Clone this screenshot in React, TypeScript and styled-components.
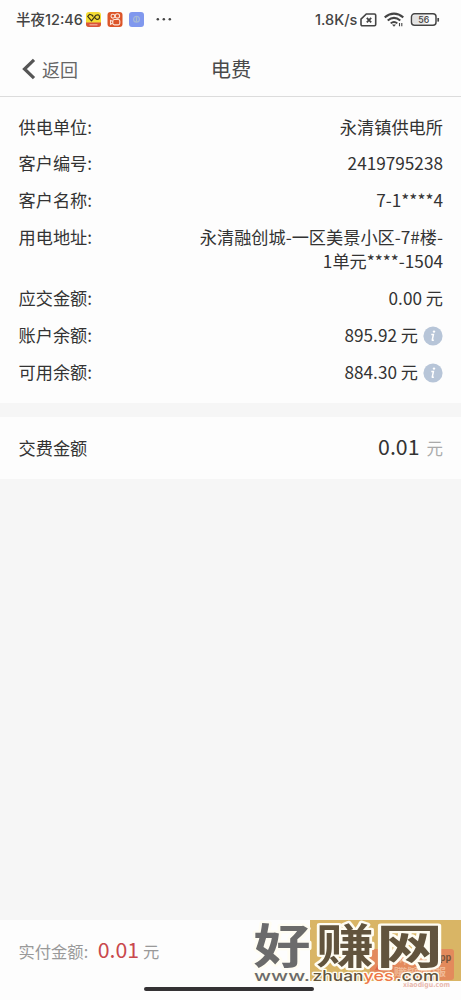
import React from 'react';
import styled, { createGlobalStyle } from 'styled-components';

const Global = createGlobalStyle`
  * { box-sizing: border-box; }
  body {
    margin: 0;
    background: #f6f6f6;
    font-family: "Noto Sans CJK SC", "Noto Sans", sans-serif;
    color: #333;
  }
`;

const Screen = styled.div`
  width: 461px;
  height: 1000px;
  display: flex;
  flex-direction: column;
  background: #f6f6f6;
  overflow: hidden;
`;

const StatusBar = styled.div`
  height: 40px;
  flex: none;
  background: #fdfdfd;
  display: flex;
  align-items: center;
  justify-content: space-between;
  padding: 0 21px 0 16px;
`;

const StatusGroup = styled.div<{ $gap: number }>`
  display: flex;
  align-items: center;
  gap: ${(p) => p.$gap}px;
`;

const StatusText = styled.span<{ $width: number }>`
  width: ${(p) => p.$width}px;
  font-family: Inter, "Noto Sans CJK SC", sans-serif;
  font-size: 14.5px;
  line-height: 20px;
  font-weight: 500;
  color: #444;
  white-space: nowrap;
`;

const Header = styled.header`
  height: 57px;
  flex: none;
  background: #fdfdfd;
  border-bottom: 1px solid #dcdcdc;
  display: grid;
  grid-template-columns: 1fr auto 1fr;
  align-items: center;
  padding: 0 21px 0 22px;
`;

const Back = styled.div`
  display: flex;
  align-items: center;
  gap: 6px;
  font-size: 18px;
  line-height: 26px;
  color: #666;
  padding-top: 2px;
`;

const Title = styled.div`
  font-size: 20.3px;
  line-height: 28px;
  color: #4a4a4a;
  padding-bottom: 1px;
`;

const Details = styled.section`
  height: 306px;
  flex: none;
  background: #fdfdfd;
  padding: 17.6px 18px 0 18.5px;
  display: flex;
  flex-direction: column;
  gap: 12.5px;
`;

const Row = styled.div`
  display: flex;
  justify-content: space-between;
  font-size: 17.2px;
  line-height: 24.3px;
`;

const Value = styled.div`
  display: flex;
  align-items: center;
  gap: 5px;
  text-align: right;
  white-space: pre-line;
`;

const PayRow = styled.section`
  height: 62px;
  flex: none;
  margin-top: 14px;
  padding: 0 18px 2px 18.5px;
  background: #fdfdfd;
  display: flex;
  align-items: center;
  justify-content: space-between;
  font-size: 17.2px;
`;

const Amount = styled.div`
  display: flex;
  align-items: baseline;
  gap: 7px;
  padding-bottom: 2px;
`;

const Figure = styled.span`
  font-size: 21.3px;
  line-height: 30px;
  color: #333;
`;

const Unit = styled.span`
  font-size: 16.5px;
  line-height: 24px;
  color: #aaa;
`;

const Footer = styled.footer`
  position: relative;
  margin-top: auto;
  height: 80px;
  flex: none;
  background: #fdfdfd;
  padding: 12px 18px 0 18.5px;
`;

const Total = styled.div`
  display: flex;
  align-items: baseline;
  font-size: 16.3px;
  line-height: 34px;
  color: #999;
`;

const TotalFigure = styled.span`
  font-size: 21.3px;
  color: #c9484c;
  margin: 0 4px 0 9.5px;
`;

const HomeBar = styled.div`
  position: absolute;
  left: 144px;
  bottom: 9px;
  width: 170px;
  height: 4px;
  border-radius: 2px;
  background: #343234;
`;

const Watermark = styled.svg`
  position: absolute;
  right: 0;
  top: 0;
  display: block;
  overflow: visible;
`;

const InfoBadge = styled.svg`
  flex: none;
  margin-top: 2px;
`;

const InfoIcon = () => (
  <InfoBadge width="20" height="20" viewBox="0 0 20 20">
    <circle cx="10" cy="10" r="9.6" fill="#b7c5d8" />
    <circle cx="11" cy="5.6" r="1.2" fill="#fff" />
    <path d="M8.3 8.6h2.1l-1.1 5.2q-.2 1 1.5.1" fill="none" stroke="#fff" strokeWidth="1.5" />
  </InfoBadge>
);

const AppIcons = () => (
  <svg width="87" height="16" viewBox="0 0 87 16">
    <rect width="15" height="15" y="0" rx="3" fill="#f4dc35" />
    <path d="M0 10.5h15v1.500a3 3 0 0 1-3 3H3a3 3 0 0 1-3-3z" fill="#d9533b" />
    <path d="M3.5 12.800h8" stroke="#f6b09a" strokeWidth="1.2" />
    <path d="M7.300 4.500L5.800 3 3.500 2.300 1.700 4.300 5.500 8.800 10 3.200Q13.500 2 13.500 5T10.300 7.200L8.800 5.600" fill="none" stroke="#3b3418" strokeWidth="1.2" strokeLinejoin="round" />
    <rect x="21.5" y="0" width="15" height="15" rx="3" fill="#dc5529" />
    <g fill="none" stroke="#fbe3d8" strokeWidth="1.1">
      <circle cx="26.9" cy="4.2" r="1.9" />
      <circle cx="31.4" cy="3.900" r="2.2" />
      <rect x="26.8" y="7.500" width="7" height="5.400" rx="1.6" />
      <path d="M26.8 9.500l-2.3-1.2v4l2.3-1.2" />
    </g>
    <rect x="43" y="0" width="15" height="15" rx="3" fill="#8098ee" />
    <circle cx="50.5" cy="7.3" r="2.9" fill="none" stroke="#a5b9d8" strokeWidth="1.2" />
    <path d="M50.5 5.200v4.500" stroke="#a9bfc9" strokeWidth="1.2" />
    <g fill="#444">
      <circle cx="71.8" cy="7.3" r="1.25" />
      <circle cx="77.8" cy="7.3" r="1.25" />
      <circle cx="83.8" cy="7.3" r="1.25" />
    </g>
  </svg>
);

const SignalIcons = () => (
  <svg width="80" height="16" viewBox="0 0 80 16" fill="none" stroke="#444">
    <path d="M6.3 2h8.2a1.2 1.2 0 0 1 1.2 1.2v9.4a1.2 1.2 0 0 1-1.2 1.2H2.2A1.2 1.2 0 0 1 1 12.600V7.200z" strokeWidth="1.6" />
    <path d="M6.800 5.900l4.400 4.400M11.200 5.900L6.800 10.300" strokeWidth="1.800" />
    <path d="M24.700 5.300Q34 -1.900 43.300 5.300" strokeWidth="2.100" />
    <path d="M27.700 8.500Q34 3.300 40.300 8.500" strokeWidth="2.100" />
    <path d="M30.700 11.400Q34 8.400 37.300 11.400" strokeWidth="1.900" />
    <path d="M32 12.400h4L34 14.800z" fill="#444" stroke="none" />
    <path d="M39.500 11v3.300M41.800 11v3.300" strokeWidth="1.100" />
    <rect x="51.500" y="1.800" width="24.500" height="11.500" rx="3" strokeWidth="1.500" />
    <rect x="53" y="3.300" width="12" height="8.500" rx="1" fill="#e2e2e2" stroke="none" />
    <path d="M78.200 6v3.600" strokeWidth="1.700" />
    <text x="63.800" y="10.800" textAnchor="middle" fontFamily="Inter, sans-serif" fontSize="9" fontWeight="500" textLength="11" lengthAdjust="spacingAndGlyphs" fill="#444" stroke="none">56</text>
  </svg>
);

const SiteMark = () => (
  <Watermark width="211" height="70" viewBox="0 0 211 70">
    <rect x="60" width="151" height="61" fill="#d9b565" />
    <rect x="120" y="29" width="84" height="31" rx="3" fill="#e38a5c" />
    <path d="M125 50l10-19 9 15-7-2-5 7z" fill="#df6549" />
    <g fontFamily="Noto Sans CJK SC, sans-serif" fontWeight="700">
      <text x="136" y="43" fontSize="13" fill="#edb08b">小嘀咕</text>
      <text x="184" y="41" fontSize="9" fill="#77543a">App</text>
      <text x="144" y="56" fontSize="10" textLength="52" fill="#f0ba97">赚钱项目线报</text>
    </g>
    <text x="153" y="67" fontFamily="DejaVu Sans, sans-serif" fontSize="7" fontWeight="700" textLength="47" lengthAdjust="spacingAndGlyphs" fill="#e9b9ae">xiaodigu.com</text>
    <g
      fontFamily="Noto Sans CJK SC, sans-serif"
      fontSize="47"
      fontWeight="700"
      stroke="#fffdf3"
      strokeWidth="4.500"
      strokeLinejoin="round"
      paintOrder="stroke"
    >
      <text x="3.500" y="42.500" textLength="57" lengthAdjust="spacingAndGlyphs" fill="#6b6b6b">好</text>
      <text x="66" y="42.500" textLength="58" lengthAdjust="spacingAndGlyphs" fill="#62543d">赚</text>
      <text x="126" y="42.500" textLength="67" lengthAdjust="spacingAndGlyphs" fill="#62543d">网</text>
    </g>
    <g
      fontFamily="Inter, sans-serif"
      fontSize="14.500"
      fontWeight="500"
      stroke="#fffdf3"
      strokeWidth="2.500"
      strokeLinejoin="round"
      paintOrder="stroke"
    >
      <text x="4" y="61" textLength="56" lengthAdjust="spacingAndGlyphs" fill="#6b6b6b">www.</text>
      <text x="62.500" y="61" textLength="51" lengthAdjust="spacingAndGlyphs" fill="#62543d">zhuan</text>
      <text x="113.500" y="61" textLength="30" lengthAdjust="spacingAndGlyphs" fill="#ee7748">yes</text>
      <text x="146" y="61" textLength="43" lengthAdjust="spacingAndGlyphs" fill="#62543d">.com</text>
    </g>
  </Watermark>
);

const details: { label: string; value: string; info?: boolean }[] = [
  { label: '供电单位:', value: '永清镇供电所' },
  { label: '客户编号:', value: '2419795238' },
  { label: '客户名称:', value: '7-1****4' },
  { label: '用电地址:', value: '永清融创城-一区美景小区-7#楼-\n1单元****-1504' },
  { label: '应交金额:', value: '0.00 元' },
  { label: '账户余额:', value: '895.92 元', info: true },
  { label: '可用余额:', value: '884.30 元', info: true },
];

export default function App() {
  return (
    <>
      <Global />
      <Screen>
        <StatusBar>
          <StatusGroup $gap={3}>
            <StatusText $width={67}>半夜12:46</StatusText>
            <AppIcons />
          </StatusGroup>
          <StatusGroup $gap={2}>
            <StatusText $width={43}>1.8K/s</StatusText>
            <SignalIcons />
          </StatusGroup>
        </StatusBar>
        <Header>
          <Back>
            <svg width="14" height="22" viewBox="0 0 14 22">
              <path d="M12 1.800L2.500 11l9.500 9.200" fill="none" stroke="#555" strokeWidth="3.200" />
            </svg>
            返回
          </Back>
          <Title>电费</Title>
        </Header>
        <Details>
          {details.map((d) => (
            <Row key={d.label}>
              <span>{d.label}</span>
              <Value>
                {d.value}
                {d.info && <InfoIcon />}
              </Value>
            </Row>
          ))}
        </Details>
        <PayRow>
          <span>交费金额</span>
          <Amount>
            <Figure>0.01</Figure>
            <Unit>元</Unit>
          </Amount>
        </PayRow>
        <Footer>
          <Total>
            实付金额:
            <TotalFigure>0.01</TotalFigure>
            元
          </Total>
          <SiteMark />
          <HomeBar />
        </Footer>
      </Screen>
    </>
  );
}
